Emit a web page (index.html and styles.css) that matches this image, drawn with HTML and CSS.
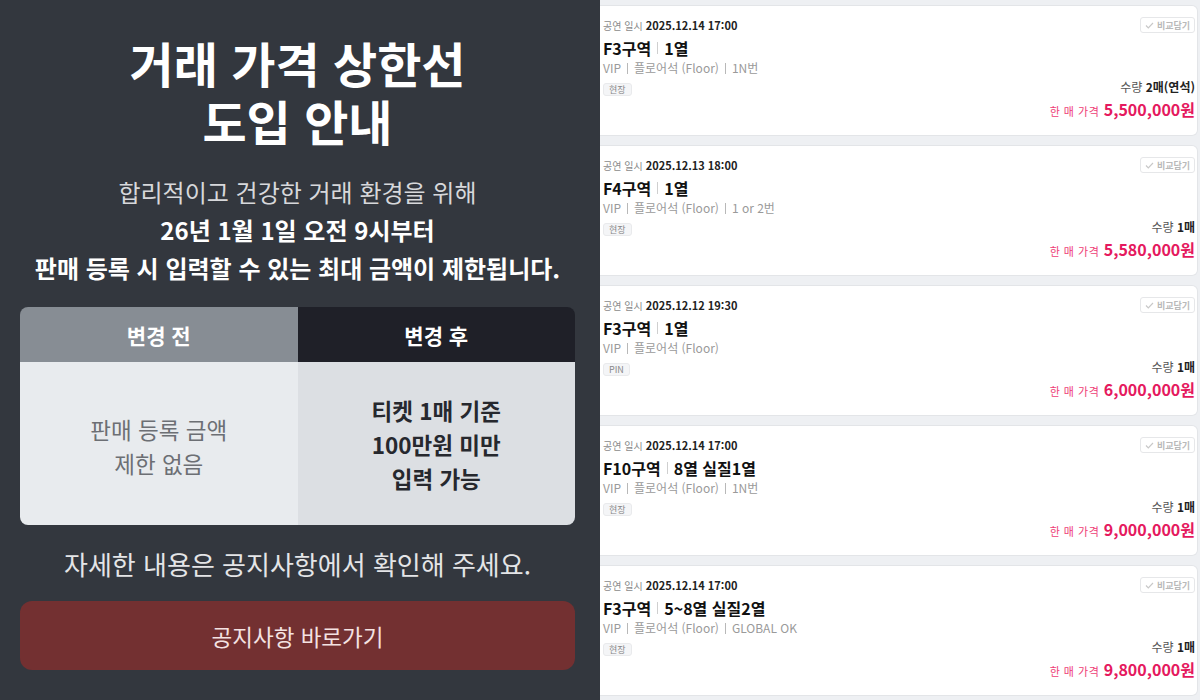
FILE: index.html
```html
<!DOCTYPE html>
<html lang="ko">
<head>
  <meta charset="UTF-8">
  <meta name="viewport" content="width=device-width, initial-scale=1.0">
  <title>거래 가격 상한선 도입 안내</title>
  <link rel="stylesheet" href="styles.css">
</head>
<body>
  <div class="page">
    <div class="notice">
      <h1 class="notice-title"><span class="title-line">거래 가격 상한선</span><span class="title-line">도입 안내</span></h1>
      <p class="notice-text">
        <span class="light">합리적이고 건강한 거래 환경을 위해</span><br>
        26년 1월 1일 오전 9시부터<br>
        판매 등록 시 입력할 수 있는 최대 금액이 제한됩니다.
      </p>

      <div class="compare">
        <div class="compare-head before">변경 전</div>
        <div class="compare-head after">변경 후</div>
        <div class="compare-body before">판매 등록 금액<br>제한 없음</div>
        <div class="compare-body after">티켓 1매 기준<br>100만원 미만<br>입력 가능</div>
      </div>

      <p class="notice-more">자세한 내용은 공지사항에서 확인해 주세요.</p>
      <button class="notice-btn">공지사항 바로가기</button>
    </div>

    <div class="list">
      <div class="card">
        <div class="card-info">
          <div class="date"><span class="date-label">공연 일시</span> 2025.12.14 17:00</div>
          <div class="seat">F3구역<span class="bar"></span>1열</div>
          <div class="grade">VIP<span class="sep"></span>플로어석 (Floor)<span class="sep"></span>1N번</div>
          <span class="tag">현장</span>
        </div>
        <div class="card-side">
          <span class="compare-btn"><svg width="9" height="7" viewBox="0 0 9 7"><polyline points="1,3.5 3.3,5.8 8,1" fill="none" stroke="#c8c8c8" stroke-width="1.2"/></svg>비교담기</span>
          <div class="qty">수량 <b>2매(연석)</b></div>
          <div class="price"><span class="price-label">한 매 가격</span> 5,500,000원</div>
        </div>
      </div>

      <div class="card">
        <div class="card-info">
          <div class="date"><span class="date-label">공연 일시</span> 2025.12.13 18:00</div>
          <div class="seat">F4구역<span class="bar"></span>1열</div>
          <div class="grade">VIP<span class="sep"></span>플로어석 (Floor)<span class="sep"></span>1 or 2번</div>
          <span class="tag">현장</span>
        </div>
        <div class="card-side">
          <span class="compare-btn"><svg width="9" height="7" viewBox="0 0 9 7"><polyline points="1,3.5 3.3,5.8 8,1" fill="none" stroke="#c8c8c8" stroke-width="1.2"/></svg>비교담기</span>
          <div class="qty">수량 <b>1매</b></div>
          <div class="price"><span class="price-label">한 매 가격</span> 5,580,000원</div>
        </div>
      </div>

      <div class="card">
        <div class="card-info">
          <div class="date"><span class="date-label">공연 일시</span> 2025.12.12 19:30</div>
          <div class="seat">F3구역<span class="bar"></span>1열</div>
          <div class="grade">VIP<span class="sep"></span>플로어석 (Floor)</div>
          <span class="tag">PIN</span>
        </div>
        <div class="card-side">
          <span class="compare-btn"><svg width="9" height="7" viewBox="0 0 9 7"><polyline points="1,3.5 3.3,5.8 8,1" fill="none" stroke="#c8c8c8" stroke-width="1.2"/></svg>비교담기</span>
          <div class="qty">수량 <b>1매</b></div>
          <div class="price"><span class="price-label">한 매 가격</span> 6,000,000원</div>
        </div>
      </div>

      <div class="card">
        <div class="card-info">
          <div class="date"><span class="date-label">공연 일시</span> 2025.12.14 17:00</div>
          <div class="seat">F10구역<span class="bar"></span>8열 실질1열</div>
          <div class="grade">VIP<span class="sep"></span>플로어석 (Floor)<span class="sep"></span>1N번</div>
          <span class="tag">현장</span>
        </div>
        <div class="card-side">
          <span class="compare-btn"><svg width="9" height="7" viewBox="0 0 9 7"><polyline points="1,3.5 3.3,5.8 8,1" fill="none" stroke="#c8c8c8" stroke-width="1.2"/></svg>비교담기</span>
          <div class="qty">수량 <b>1매</b></div>
          <div class="price"><span class="price-label">한 매 가격</span> 9,000,000원</div>
        </div>
      </div>

      <div class="card">
        <div class="card-info">
          <div class="date"><span class="date-label">공연 일시</span> 2025.12.14 17:00</div>
          <div class="seat">F3구역<span class="bar"></span>5~8열 실질2열</div>
          <div class="grade">VIP<span class="sep"></span>플로어석 (Floor)<span class="sep"></span>GLOBAL OK</div>
          <span class="tag">현장</span>
        </div>
        <div class="card-side">
          <span class="compare-btn"><svg width="9" height="7" viewBox="0 0 9 7"><polyline points="1,3.5 3.3,5.8 8,1" fill="none" stroke="#c8c8c8" stroke-width="1.2"/></svg>비교담기</span>
          <div class="qty">수량 <b>1매</b></div>
          <div class="price"><span class="price-label">한 매 가격</span> 9,800,000원</div>
        </div>
      </div>
    </div>
  </div>
</body>
</html>
```

FILE: styles.css
```css
body {
  margin: 0;
  font-family: "Noto Sans CJK KR", "Noto Sans", sans-serif;
  background: #eef0f3;
}
.page {
  display: flex;
  width: 1200px;
  height: 700px;
  overflow: hidden;
}

/* left notice panel */
.notice {
  width: 600px;
  box-sizing: border-box;
  padding: 33px 25px 0 20px;
  background: #33373e;
  color: #fff;
  text-align: center;
}
.notice-title {
  margin: 0;
  font-size: 48px;
  font-weight: 700;
}
.title-line {
  display: block;
  height: 58px;
  line-height: 58px;
}
.notice-text {
  margin: 24px 0 0;
  font-size: 24px;
  line-height: 38px;
  font-weight: 700;
}
.notice-text .light {
  font-weight: 400;
  color: #d7d8db;
}
.compare {
  margin-top: 20px;
  display: grid;
  grid-template-columns: 1fr 1fr;
  grid-template-rows: 55px 163px;
  border-radius: 8px;
  overflow: hidden;
}
.compare-head {
  display: flex;
  align-items: center;
  justify-content: center;
  font-size: 21px;
  font-weight: 700;
  color: #fff;
}
.compare-head.before { background: #878d94; }
.compare-head.after { background: #1f2028; }
.compare-body {
  display: flex;
  align-items: center;
  justify-content: center;
  font-size: 22.5px;
  line-height: 34px;
}
.compare-body.before {
  background: #e8ebee;
  color: #6c6f74;
  padding-top: 4px;
}
.compare-body.after {
  background: #dcdfe3;
  color: #26282e;
  font-weight: 700;
}
.notice-more {
  margin: 22px 0 0;
  font-size: 26px;
  line-height: 34px;
  color: #e4e5e7;
}
.notice-btn {
  display: block;
  width: 100%;
  height: 69px;
  margin-top: 20px;
  border: none;
  border-radius: 12px;
  background: #733031;
  color: #f4e2e2;
  font-family: inherit;
  font-size: 22.5px;
}

/* right ticket list */
.list {
  flex: 1;
  display: flex;
  flex-direction: column;
  gap: 9px;
  padding: 5px 2px 0 0;
  background: #eef0f3;
}
.card {
  flex: 0 0 131px;
  box-sizing: border-box;
  display: flex;
  justify-content: space-between;
  padding: 7px 2px 0 3px;
  background: #fff;
  border: 1px solid #e3e5e8;
  border-left: none;
  border-radius: 0 6px 6px 0;
}
.card-info {
  display: flex;
  flex-direction: column;
  align-items: flex-start;
}
.date {
  font-size: 11px;
  line-height: 16px;
  font-weight: 700;
  color: #222;
  margin-top: 4px;
}
.date-label {
  font-size: 10px;
  font-weight: 400;
  color: #8a8a8a;
}
.seat {
  margin-top: 3px;
  font-size: 16px;
  line-height: 22px;
  font-weight: 700;
  color: #111;
  display: flex;
  align-items: center;
}
.bar {
  display: inline-block;
  width: 1px;
  height: 12px;
  margin: 0 6px;
  background: #cfcfcf;
}
.grade {
  font-size: 12px;
  line-height: 18px;
  color: #9a9a9a;
  display: flex;
  align-items: center;
}
.sep {
  display: inline-block;
  width: 1px;
  height: 11px;
  margin: 0 6px;
  background: #b8b8b8;
}
.tag {
  margin-top: 6px;
  padding: 0 5px;
  font-size: 9px;
  line-height: 11px;
  color: #888;
  background: #f4f5f7;
  border: 1px solid #e9eaec;
  border-radius: 3px;
}
.card-side {
  display: flex;
  flex-direction: column;
  align-items: flex-end;
}
.compare-btn {
  display: flex;
  align-items: center;
  gap: 3px;
  box-sizing: border-box;
  height: 16px;
  margin-top: 4px;
  padding: 0 4px;
  font-size: 9px;
  font-weight: 700;
  color: #b9b9b9;
  border: 1px solid #e6e7e9;
  border-radius: 3px;
}
.qty {
  margin-top: auto;
  font-size: 12px;
  line-height: 16px;
  color: #555;
}
.qty b {
  color: #222;
}
.price {
  margin-top: 3px;
  margin-bottom: 13px;
  font-size: 16px;
  line-height: 22px;
  font-weight: 700;
  color: #e5195e;
}
.price-label {
  font-size: 11px;
  font-weight: 400;
  color: #ee3d77;
  letter-spacing: 0.5px;
}
```
